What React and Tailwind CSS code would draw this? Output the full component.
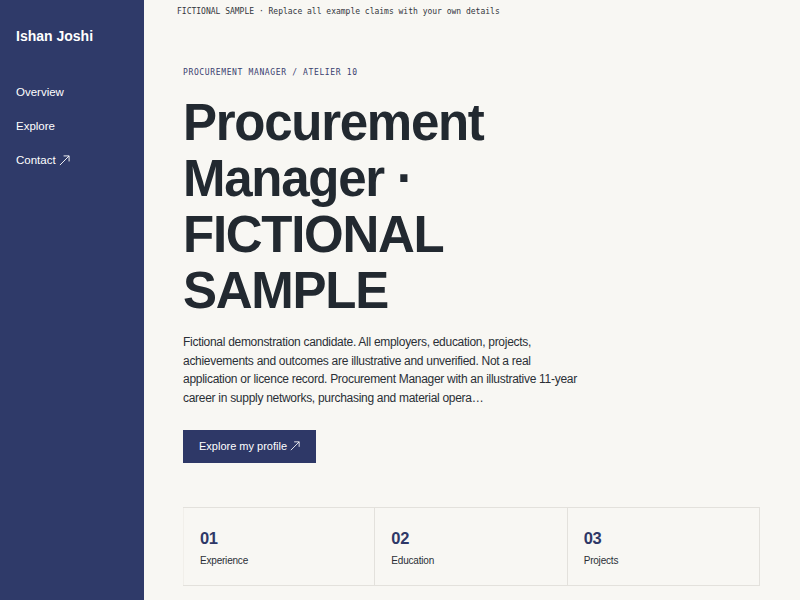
import React from 'react';

const stats = [
    { n: '01', label: 'Experience' },
    { n: '02', label: 'Education' },
    { n: '03', label: 'Projects' },
];

// thin diagonal arrow, like the one in the nav and button
function Arrow({ size = 11 }) {
    return (
        <svg width={size} height={size} viewBox="0 0 12 12" fill="none" stroke="currentColor" strokeWidth="1" className="inline-block align-[-1px]">
            <path d="M1 11 L11 1" />
            <path d="M5 1 H11 V7" />
        </svg>
    );
}

export default function App() {
    return (
        <div className="flex min-h-screen w-full bg-[#f8f7f3] font-['Liberation_Sans',Arial,sans-serif]">
            {/* Sidebar */}
            <aside className="w-[144px] shrink-0 bg-[#2f3a69] px-4 pt-[27px] text-white">
                <div className="text-[14px] font-bold leading-[18px]">Ishan Joshi</div>
                <nav className="mt-[38px] flex flex-col gap-[16px] text-[11.5px] leading-[18px]">
                    <a>Overview</a>
                    <a>Explore</a>
                    <a className="flex items-center gap-[3px]">
                        Contact <Arrow size={11} />
                    </a>
                </nav>
            </aside>

            {/* Main */}
            <main className="flex-1">
                <div className="px-[33px] pt-[7px] font-['DejaVu_Sans_Mono',monospace] text-[8px] leading-[10px] text-[#33363d]">
                    FICTIONAL SAMPLE · Replace all example claims with your own details
                </div>

                <section className="px-[39px] pt-[51px] pb-4">
                    <div className="font-['DejaVu_Sans_Mono',monospace] text-[8px] uppercase leading-[10px] tracking-[0.08em] text-[#3a4170]">
                        Procurement Manager / Atelier 10
                    </div>
                    <h1 className="mt-[17px] text-[51px] font-bold leading-[56px] tracking-[-0.025em] text-[#222930]">
                        Procurement
                        <br />
                        Manager ·
                        <br />
                        FICTIONAL
                        <br />
                        SAMPLE
                    </h1>
                    <p className="mt-[14px] max-w-[404px] text-[12px] leading-[18.7px] tracking-[-0.024em] text-[#2a2f36]">
                        Fictional demonstration candidate. All employers, education, projects, achievements and outcomes are illustrative and unverified. Not a real application or licence record. Procurement Manager with an illustrative 11-year career in supply networks, purchasing and material opera…
                    </p>
                    <button className="mt-[22px] flex h-[33px] items-center gap-[3px] bg-[#2e3867] px-4 text-[11px] text-white">
                        Explore my profile <Arrow size={10} />
                    </button>

                    {/* Stats */}
                    <div className="mt-[44px] grid w-[577px] grid-cols-3 border-y border-[#e3e1dc]">
                        {stats.map((s, i) => (
                            <div
                                key={s.n}
                                className={`h-[77px] px-4 pt-[20px] border-r border-[#e3e1dc] ${i === 0 ? 'border-l border-l-[#f1efea]' : ''}`}
                            >
                                <div className="text-[16.5px] font-bold leading-[20px] tracking-[-0.02em] text-[#2e3867]">{s.n}</div>
                                <div className="mt-[5px] text-[10px] leading-[16px] tracking-[-0.02em] text-[#2a2f36]">{s.label}</div>
                            </div>
                        ))}
                    </div>
                </section>
            </main>
        </div>
    );
}
